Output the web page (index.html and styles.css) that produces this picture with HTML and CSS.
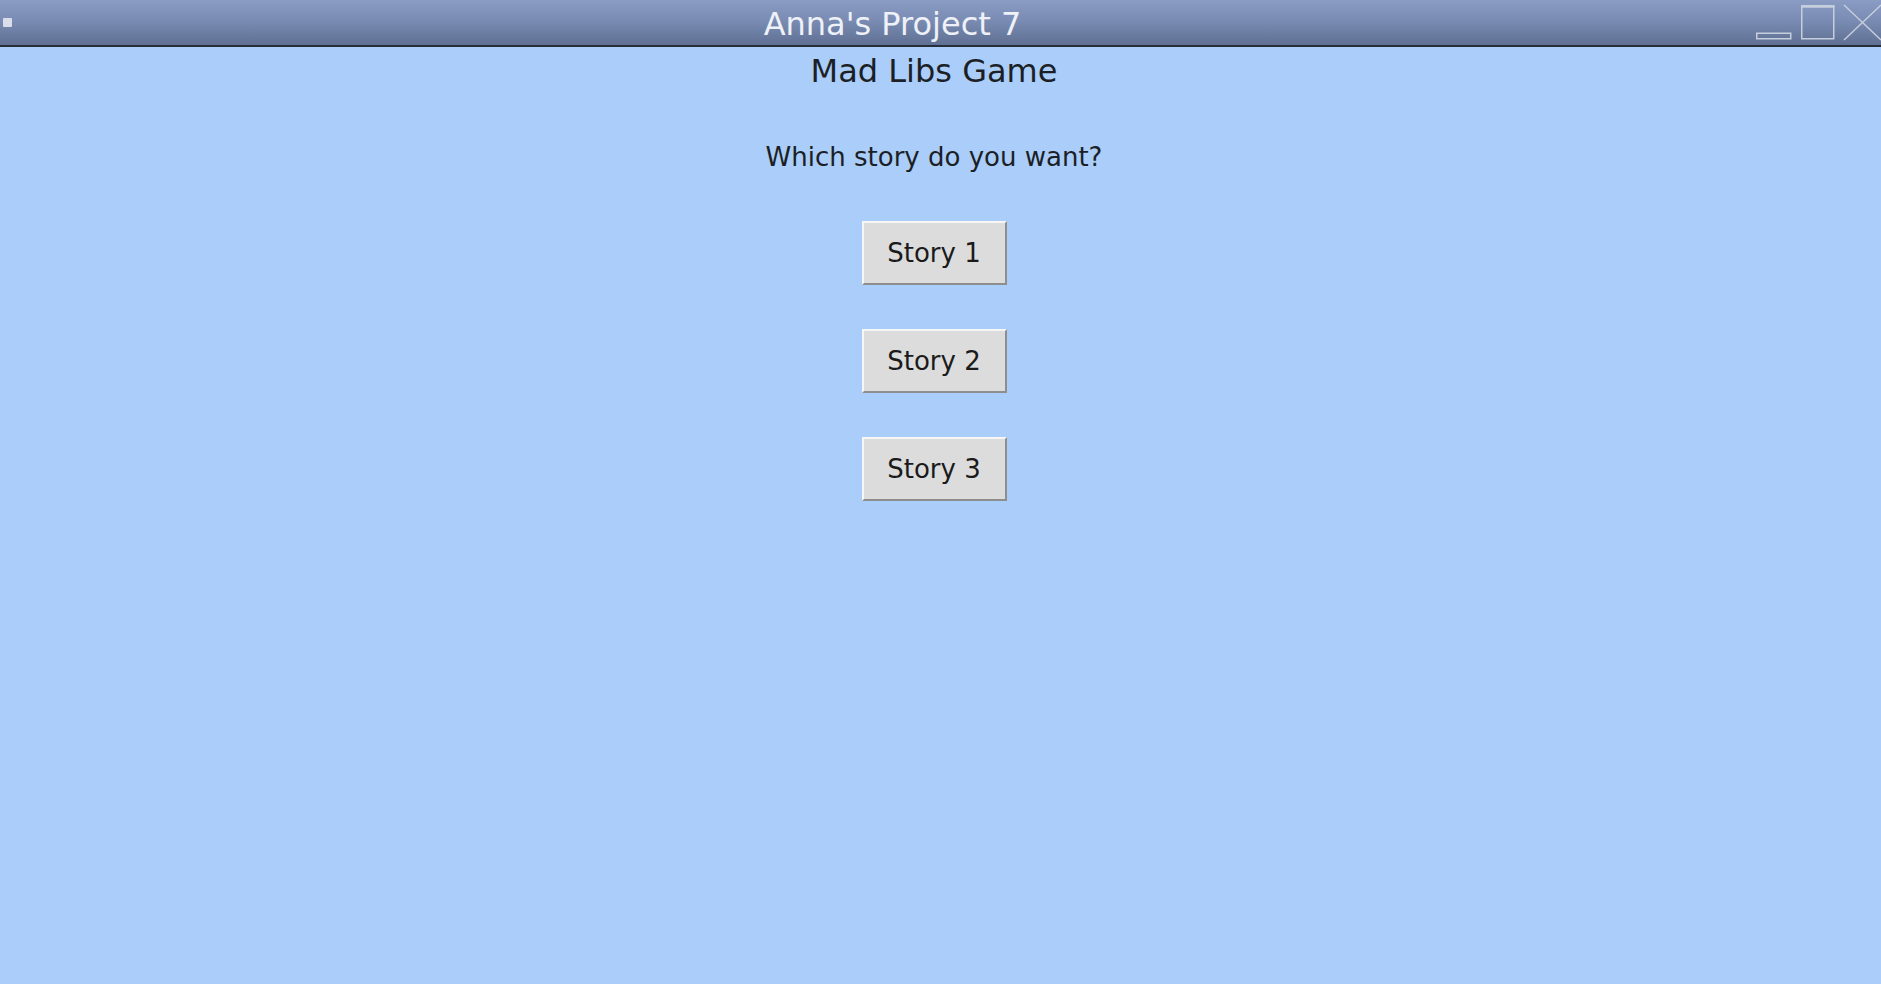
FILE: index.html
```html
<!DOCTYPE html>
<html>
<head>
<meta charset="utf-8">
<title>Anna's Project 7</title>
<link rel="stylesheet" href="styles.css">
</head>
<body>
<div class="window">
  <div class="titlebar">
    <div class="tb-icon"><span class="tb-square"></span></div>
    <div class="tb-title">Anna's Project 7</div>
    <div class="tb-controls">
      <svg width="131" height="45" viewBox="0 0 131 45">
        <rect x="6.75" y="33.25" width="34" height="5.5" fill="none" stroke="#c6cede" stroke-width="1.5"/>
        <rect x="51.75" y="5.75" width="32" height="33" fill="none" stroke="#c6cede" stroke-width="1.5"/>
        <line x1="51" y1="6.5" x2="84.5" y2="6.5" stroke="#c6cede" stroke-width="2.5"/>
        <line x1="94" y1="5" x2="131" y2="40" stroke="#c6cede" stroke-width="1.4"/>
        <line x1="131" y1="5" x2="94" y2="40" stroke="#c6cede" stroke-width="1.4"/>
      </svg>
    </div>
  </div>
  <div class="content">
    <h1 class="heading">Mad Libs Game</h1>
    <p class="question">Which story do you want?</p>
    <div class="buttons">
      <button class="story-btn">Story 1</button>
      <button class="story-btn">Story 2</button>
      <button class="story-btn">Story 3</button>
    </div>
  </div>
</div>
</body>
</html>
```

FILE: styles.css
```css
html, body {
  margin: 0;
  padding: 0;
  height: 100%;
}

body {
  background: #aacdf9;
  font-family: "DejaVu Sans", "Liberation Sans", sans-serif;
  overflow: hidden;
}

.window {
  display: flex;
  flex-direction: column;
  height: 984px;
}

.titlebar {
  display: flex;
  height: 45px;
  border-bottom: 2px solid #262d3b;
  background: linear-gradient(to bottom, #8a9cc4 0%, #7a8cb3 45%, #5f7093 100%);
}

.tb-icon {
  width: 35px;
  display: flex;
  align-items: flex-start;
}

.tb-square {
  display: block;
  width: 9px;
  height: 9px;
  margin: 18px 0 0 3px;
  background: #dadeea;
  border-radius: 1px;
}

.tb-title {
  flex: 1;
  text-align: center;
  color: #eef1f7;
  font-size: 32px;
  line-height: 42px;
  padding-top: 3px;
  white-space: nowrap;
}

.tb-controls {
  width: 131px;
  display: flex;
}

.tb-controls svg {
  display: block;
}

.content {
  display: flex;
  flex-direction: column;
  align-items: center;
  padding-right: 13px;
  color: #1c1f26;
}

.heading {
  margin: 6px 0 0 0;
  font-weight: normal;
  font-size: 32px;
  line-height: 37px;
}

.question {
  margin: 52px 0 0 0;
  font-size: 26px;
  line-height: 30px;
}

.buttons {
  display: flex;
  flex-direction: column;
  align-items: center;
  gap: 44px;
  margin-top: 49px;
}

.story-btn {
  box-sizing: border-box;
  width: 145px;
  height: 64px;
  padding: 0;
  font-family: "DejaVu Sans", "Liberation Sans", sans-serif;
  font-size: 26px;
  line-height: 30px;
  color: #1a1a1a;
  background: #dcdcdc;
  border: 2px solid;
  border-color: #f6f6f6 #8e8e8e #8e8e8e #f6f6f6;
  border-radius: 0;
}
```
